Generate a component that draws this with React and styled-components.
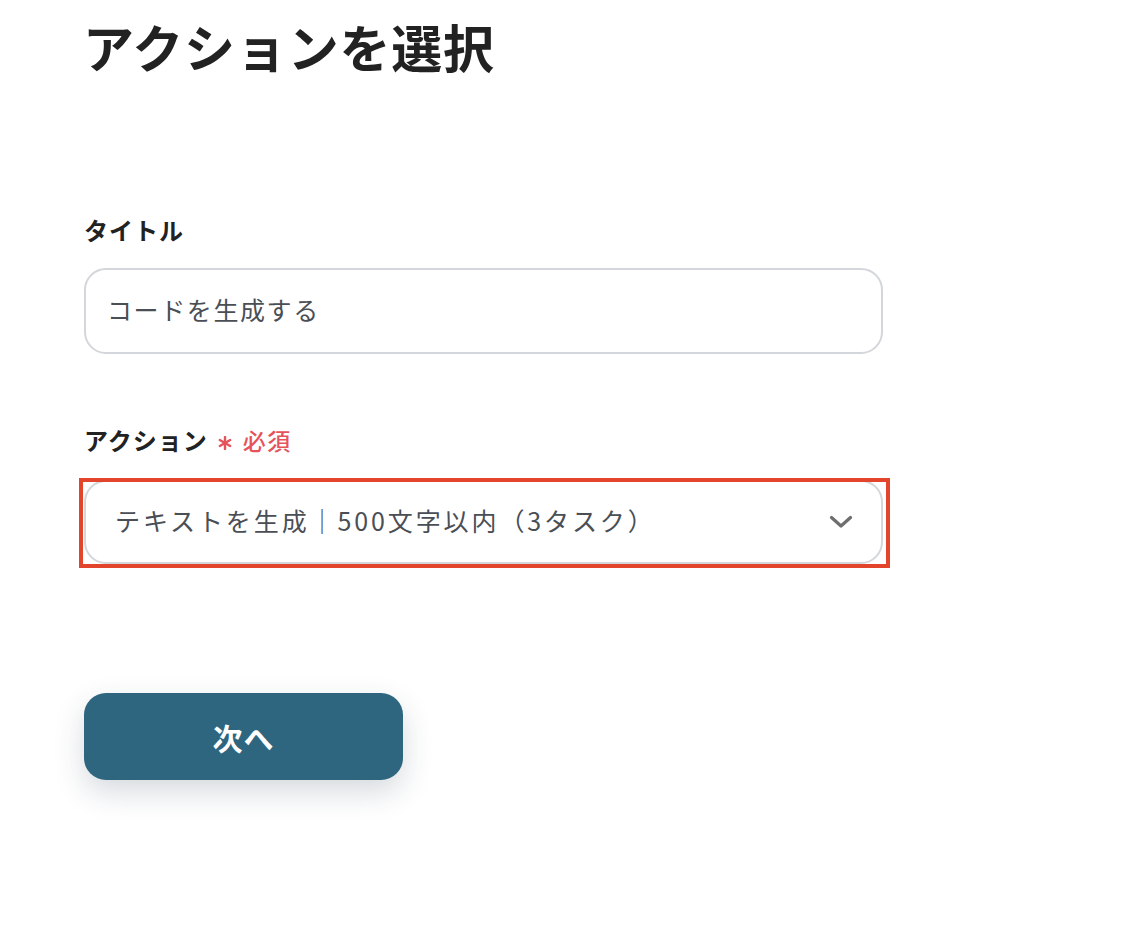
import React from "react";
import styled, { createGlobalStyle } from "styled-components";

const Global = createGlobalStyle`
  html, body { margin: 0; padding: 0; background: #ffffff; }
  body {
    font-family: "Noto Sans CJK JP", "Noto Sans", sans-serif;
    color: #222222;
  }
`;

const Page = styled.div`
  width: 1132px;
  height: 930px;
  box-sizing: border-box;
  padding: 11px 0 0 83px;
  display: flex;
  flex-direction: column;
`;

const Title = styled.h1`
  margin: 0;
  font-size: 51px;
  line-height: 70px;
  font-weight: 700;
  color: #222222;
  letter-spacing: 0.8px;
`;

const Form = styled.div`
  width: 799px;
  margin-left: 1px;
  margin-top: 132px;
  display: flex;
  flex-direction: column;
`;

const Field = styled.div`
  display: flex;
  flex-direction: column;
  gap: ${(p) => p.$gap}px;
  margin-bottom: ${(p) => p.$after}px;
`;

const Label = styled.div`
  display: flex;
  align-items: center;
  font-size: 24px;
  line-height: 34px;
  font-weight: 700;
  color: #222222;
  letter-spacing: 1px;
`;

const Required = styled.span`
  display: inline-flex;
  align-items: center;
  margin-left: 10px;
  color: #e5545b;
  font-size: 23px;
  font-weight: 500;
  gap: 11px;
  letter-spacing: 1.5px;
`;

const Star = styled.svg`
  width: 14px;
  height: 14px;
  position: relative;
  top: 3px;
`;

const Box = styled.div`
  position: relative;
  box-sizing: border-box;
  height: ${(p) => p.$h}px;
  border: 2px solid #d3d6da;
  border-radius: 22px;
  background: #ffffff;
  display: flex;
  align-items: center;
  padding: 0 ${(p) => p.$pr}px 4px ${(p) => p.$pl}px;
  font-size: 25px;
  color: #4a4e55;
`;

const BoxText = styled.span`
  flex: 1;
  letter-spacing: ${(p) => p.$ls}px;
`;

const Highlight = styled.div`
  position: absolute;
  top: -4px;
  left: -7px;
  right: -9px;
  bottom: -6px;
  border: 4px solid #e2452b;
  pointer-events: none;
`;

const Chevron = styled.svg`
  width: 24px;
  height: 14px;
  flex: none;
  margin-top: 4px;
`;

const Button = styled.button`
  margin-top: 129px;
  margin-left: 1px;
  width: 319px;
  height: 87px;
  border: none;
  border-radius: 22px;
  background: #2e6680;
  color: #ffffff;
  font-family: "Noto Sans CJK JP", "Noto Sans", sans-serif;
  font-size: 30px;
  font-weight: 700;
  letter-spacing: 1px;
  box-shadow: 0 12px 30px rgba(30, 50, 70, 0.18);
  cursor: pointer;
`;

export default function App() {
  return (
    <>
      <Global />
      <Page>
        <Title>アクションを選択</Title>
        <Form>
          <Field $gap={21} $after={69}>
            <Label>タイトル</Label>
            <Box $h={86} $pl={21} $pr={22}>
              <BoxText $ls={1.6}>コードを生成する</BoxText>
            </Box>
          </Field>
          <Field $gap={23} $after={0}>
            <Label>
              アクション
              <Required>
                <Star viewBox="0 0 14 14">
                  <g stroke="#e5545b" strokeWidth="2.4" strokeLinecap="round">
                    <line x1="7" y1="1" x2="7" y2="13" />
                    <line x1="1.8" y1="4" x2="12.2" y2="10" />
                    <line x1="1.8" y1="10" x2="12.2" y2="4" />
                  </g>
                </Star>
                必須
              </Required>
            </Label>
            <Box $h={84} $pl={29} $pr={28}>
              <BoxText $ls={2.9}>テキストを生成｜500文字以内（3タスク）</BoxText>
              <Chevron viewBox="0 0 24 14">
                <path
                  d="M2.5 2.5 L12 11 L21.5 2.5"
                  fill="none"
                  stroke="#6e6e6e"
                  strokeWidth="3.2"
                  strokeLinecap="round"
                  strokeLinejoin="round"
                />
              </Chevron>
              <Highlight />
            </Box>
          </Field>
        </Form>
        <Button>次へ</Button>
      </Page>
    </>
  );
}
